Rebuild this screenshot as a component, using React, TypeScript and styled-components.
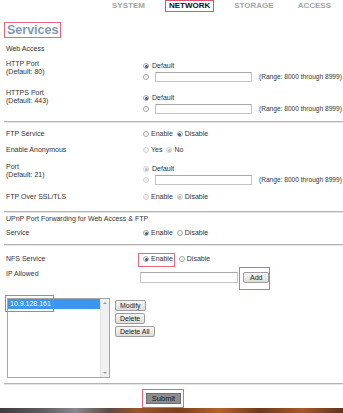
import React from 'react';
import styled, { createGlobalStyle, css } from 'styled-components';

const GlobalStyle = createGlobalStyle`
  html, body {
    margin: 0;
    padding: 0;
    background: #ffffff;
  }
  body {
    width: 343px;
    height: 413px;
    overflow: hidden;
    font-family: "Liberation Sans", Arial, sans-serif;
    color: #333;
  }
`;

const Page = styled.div`
  width: 343px;
  height: 413px;
  display: flex;
  flex-direction: column;
`;

const Nav = styled.nav`
  display: flex;
  align-items: center;
  gap: 16px;
  height: 12px;
  padding-left: 108px;
`;

const NavItem = styled.span<{ $active?: boolean }>`
  font-size: 8px;
  font-weight: bold;
  line-height: 10px;
  padding: 0 3px;
  color: ${p => (p.$active ? '#111' : '#a5a5a5')};
  border: 1px solid ${p => (p.$active ? '#e0546c' : 'transparent')};
`;

const Mark = styled.span`
  display: inline-flex;
  align-items: center;
  border: 1px solid #e6687c;
`;

const Title = styled(Mark)`
  align-self: flex-start;
  margin: 10px 0 0 4px;
  height: 14px;
  padding: 0 2px;
  font-size: 12.5px;
  font-weight: bold;
  color: #8198b3;
`;

const Content = styled.div`
  display: flex;
  flex-direction: column;
  padding-left: 6px;
`;

const Text = styled.div`
  font-size: 7px;
  line-height: 8px;
  white-space: nowrap;
`;

const Row = styled.div<{ $top: number }>`
  display: flex;
  align-items: flex-start;
  margin-top: ${p => p.$top}px;
`;

const Label = styled.div<{ $pad?: number }>`
  width: 137px;
  flex-shrink: 0;
  padding-top: ${p => p.$pad || 0}px;
  font-size: 7px;
  line-height: 8px;
  white-space: nowrap;
`;

const Controls = styled.div<{ $pad?: number }>`
  display: flex;
  flex-direction: column;
  padding-top: ${p => p.$pad || 0}px;
`;

const InputLine = styled.div`
  display: flex;
  align-items: flex-start;
  margin-left: -3px;
`;

const Line = styled.div<{ $gap?: number }>`
  display: flex;
  align-items: center;
  gap: ${p => p.$gap ?? 3}px;
  font-size: 7px;
  line-height: 8px;
  white-space: nowrap;
`;

const Radio = styled.span<{ $checked?: boolean; $disabled?: boolean }>`
  width: 6px;
  height: 6px;
  box-sizing: border-box;
  border-radius: 50%;
  flex-shrink: 0;
  border: 1px solid ${p => (p.$disabled ? '#d2d2d2' : '#a8a8a8')};
  background: ${p => (p.$disabled ? '#f2f2f2' : '#f6f6f6')};
  display: flex;
  align-items: center;
  justify-content: center;
  ${p =>
    p.$checked &&
    css`
      &::after {
        content: '';
        width: 3px;
        height: 3px;
        border-radius: 50%;
        background: ${p.$disabled ? '#b9c0c8' : '#3e5f80'};
      }
    `}
`;

const Option = styled.span`
  display: inline-flex;
  align-items: center;
  gap: 2px;
`;

const Options = styled.div`
  display: flex;
  align-items: center;
  gap: 4px;
  font-size: 7px;
  line-height: 8px;
  white-space: nowrap;
`;

const TextBox = styled.span<{ $w: number; $h: number }>`
  display: block;
  width: ${p => p.$w}px;
  height: ${p => p.$h}px;
  box-sizing: border-box;
  border: 1px solid #c4c4c4;
  border-top-color: #a9a9a9;
  background: #fff;
  flex-shrink: 0;
`;

const Range = styled.span`
  font-size: 6.6px;
  margin-left: 1px;
`;

const Divider = styled.div<{ $top: number }>`
  margin: ${p => p.$top}px 0 0 4px;
  height: 0;
  border-top: 1px solid #b4b4b4;
  border-bottom: 1px solid #e6e6e6;
`;

const OptionMark = styled(Mark)`
  margin: -2px 0 -4px -5px;
  padding: 1px 1px 3px 4px;
`;

const AddMark = styled(Mark)`
  margin-left: 1px;
  padding: 4px 0 6px 3px;
`;

const Button = styled.button<{ $wide?: number }>`
  font-family: "Liberation Sans", Arial, sans-serif;
  font-size: 7px;
  line-height: 8px;
  color: #222;
  padding: 0 ${p => p.$wide ?? 4}px;
  height: 11px;
  border: 1px solid #9d9d9d;
  border-radius: 2px;
  background: linear-gradient(#f7f7f7, #dcdcdc);
  cursor: pointer;
`;

const ListArea = styled.div`
  display: flex;
  align-items: flex-start;
  gap: 5px;
  margin: 8px 0 0 1px;
`;

const ListWrap = styled.div`
  position: relative;
`;

const ListBox = styled.div`
  width: 103px;
  height: 80px;
  box-sizing: border-box;
  border: 1px solid #a6a6a6;
  display: flex;
  background: #fff;
`;

const ListItems = styled.div`
  flex: 1;
`;

const ListItem = styled.div<{ $selected?: boolean }>`
  height: 10px;
  padding-left: 2px;
  font-size: 7px;
  line-height: 10px;
  color: ${p => (p.$selected ? '#fff' : '#333')};
  background: ${p => (p.$selected ? '#3d96ee' : 'transparent')};
`;

const Scrollbar = styled.div`
  width: 9px;
  background: #f0f0f0;
  border-left: 1px solid #e2e2e2;
  display: flex;
  flex-direction: column;
  justify-content: space-between;
  align-items: center;
  padding: 3px 0;
  box-sizing: border-box;
`;

const Arrow = styled.span<{ $down?: boolean }>`
  width: 0;
  height: 0;
  border-left: 2px solid transparent;
  border-right: 2px solid transparent;
  ${p =>
    p.$down
      ? css`border-top: 2px solid #9a9a9a;`
      : css`border-bottom: 2px solid #9a9a9a;`}
`;

const ItemMark = styled.span`
  position: absolute;
  left: -2px;
  top: -3px;
  width: 49px;
  height: 17px;
  box-sizing: border-box;
  border: 1px solid #e6687c;
  pointer-events: none;
`;

const ButtonStack = styled.div`
  display: flex;
  flex-direction: column;
  align-items: flex-start;
  gap: 2px;
  padding-top: 2px;
`;

const SubmitRow = styled.div`
  display: flex;
  padding-left: 142px;
  margin-top: 4px;
`;

const SubmitMark = styled(Mark)`
  padding: 3px 2px 3px 3px;
`;

const SubmitButton = styled.button`
  font-family: "Liberation Sans", Arial, sans-serif;
  font-size: 7.5px;
  line-height: 9px;
  height: 11px;
  width: 35px;
  padding: 0;
  color: #1a1a1a;
  background: #8d8d8d;
  border: 1px solid #6f6f6f;
  border-radius: 0;
`;

const Strip = styled.div`
  margin-top: auto;
  height: 5px;
  background: linear-gradient(
    90deg,
    #3f3b3e 0%,
    #5d5a60 12%,
    #8a8790 22%,
    #5b4a42 32%,
    #9a5628 40%,
    #7a3f1c 52%,
    #b4642c 64%,
    #6c3a1e 76%,
    #a8592a 88%,
    #5a3520 100%
  );
`;

type PortProps = { label: string; sub: string; pad: number; top: number; disabled?: boolean };

const PortRow: React.FC<PortProps> = ({ label, sub, pad, top, disabled }) => (
  <Row $top={top}>
    <Label>
      {label}
      <br />
      {sub}
    </Label>
    <Controls $pad={pad}>
      <Line>
        <Radio $checked $disabled={disabled} />
        <span>Default</span>
      </Line>
      <Line $gap={6} style={{ marginTop: 2 }}>
        <Radio $disabled={disabled} />
        <TextBox $w={97} $h={10} />
        <Range>(Range: 8000 through 8999)</Range>
      </Line>
    </Controls>
  </Row>
);

type ToggleProps = { a: string; b: string; first?: boolean; disabled?: boolean };

const Toggle: React.FC<ToggleProps> = ({ a, b, first, disabled }) => (
  <Options>
    <Option>
      <Radio $checked={first} $disabled={disabled} />
      {a}
    </Option>
    <Option>
      <Radio $checked={!first} $disabled={disabled} />
      {b}
    </Option>
  </Options>
);

export default function App() {
  return (
    <Page>
      <GlobalStyle />
      <Nav>
        <NavItem>SYSTEM</NavItem>
        <NavItem $active>NETWORK</NavItem>
        <NavItem>STORAGE</NavItem>
        <NavItem>ACCESS</NavItem>
      </Nav>
      <Title>Services</Title>
      <Content>
        <Text style={{ marginTop: 7 }}>Web Access</Text>
        <PortRow label="HTTP Port" sub="(Default: 80)" pad={2} top={7} />
        <PortRow label="HTTPS Port" sub="(Default: 443)" pad={5} top={7} />
      </Content>
      <Divider $top={7} />
      <Content>
        <Row $top={7}>
          <Label>FTP Service</Label>
          <Toggle a="Enable" b="Disable" />
        </Row>
        <Row $top={8}>
          <Label>Enable Anonymous</Label>
          <Toggle a="Yes" b="No" disabled />
        </Row>
        <PortRow label="Port" sub="(Default: 21)" pad={2} top={9} disabled />
        <Row $top={8}>
          <Label>FTP Over SSL/TLS</Label>
          <Toggle a="Enable" b="Disable" disabled />
        </Row>
      </Content>
      <Divider $top={10} />
      <Content>
        <Text style={{ marginTop: 2 }}>UPnP Port Forwarding for Web Access &amp; FTP</Text>
        <Row $top={6}>
          <Label>Service</Label>
          <Toggle a="Enable" b="Disable" first />
        </Row>
      </Content>
      <Divider $top={7} />
      <Content>
        <Row $top={9}>
          <Label>NFS Service</Label>
          <Options>
            <OptionMark>
              <Option>
                <Radio $checked />
                Enable
              </Option>
            </OptionMark>
            <Option>
              <Radio />
              Disable
            </Option>
          </Options>
        </Row>
        <Row $top={4}>
          <Label $pad={3}>IP Allowed</Label>
          <InputLine>
            <TextBox $w={98} $h={11} style={{ marginTop: 5 }} />
            <AddMark>
              <Button $wide={6}>Add</Button>
            </AddMark>
          </InputLine>
        </Row>
        <ListArea>
          <ListWrap>
            <ListBox>
              <ListItems>
                <ListItem $selected>10.9.128.161</ListItem>
              </ListItems>
              <Scrollbar>
                <Arrow />
                <Arrow $down />
              </Scrollbar>
            </ListBox>
            <ItemMark />
          </ListWrap>
          <ButtonStack>
            <Button>Modify</Button>
            <Button>Delete</Button>
            <Button>Delete All</Button>
          </ButtonStack>
        </ListArea>
      </Content>
      <Divider $top={5} />
      <SubmitRow>
        <SubmitMark>
          <SubmitButton>Submit</SubmitButton>
        </SubmitMark>
      </SubmitRow>
      <Strip />
    </Page>
  );
}
